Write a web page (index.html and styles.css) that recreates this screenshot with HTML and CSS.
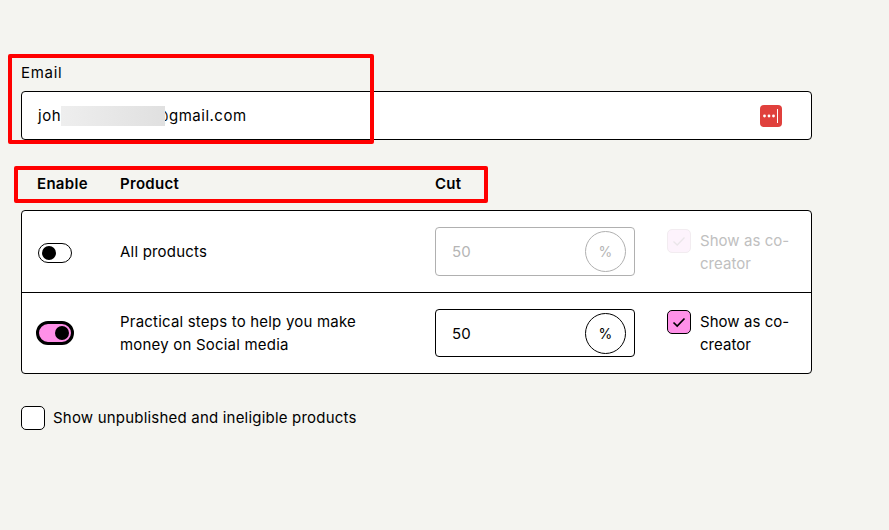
FILE: index.html
```html
<!DOCTYPE html>
<html lang="en">
<head>
<meta charset="utf-8">
<title>Collaborator</title>
<link rel="stylesheet" href="styles.css">
</head>
<body>
<main class="page">
  <section class="email-field">
    <label class="field-label" for="email">Email</label>
    <div class="email-input" id="email">
      <span class="email-text">joh<span class="redact"></span>@gmail.com</span>
      <svg class="pw-icon" width="22" height="22" viewBox="0 0 22 22" aria-hidden="true">
        <rect width="22" height="22" rx="4" fill="#e0403c"/>
        <circle cx="4.5" cy="11" r="1.4" fill="#fff"/>
        <circle cx="9" cy="11" r="1.4" fill="#fff"/>
        <circle cx="13.5" cy="11" r="1.4" fill="#fff"/>
        <rect x="17" y="4" width="1" height="14" fill="#fff"/>
      </svg>
    </div>
  </section>

  <div class="table-head">
    <span>Enable</span>
    <span>Product</span>
    <span>Cut</span>
  </div>

  <section class="table">
    <div class="row row-off">
      <span class="toggle"><span class="knob"></span></span>
      <span class="product">All products</span>
      <div class="cut cut-off">
        <span>50</span>
        <span class="pct">%</span>
      </div>
      <div class="cocreator cocreator-off">
        <span class="check check-off">
          <svg width="16" height="16" viewBox="0 0 16 16" aria-hidden="true"><path d="M2.5 8.5 6.2 12 13.5 4.5" fill="none" stroke="#eae6e9" stroke-width="1.3"/></svg>
        </span>
        <span>Show as co-creator</span>
      </div>
    </div>
    <div class="row">
      <span class="toggle toggle-on"><span class="knob"></span></span>
      <span class="product">Practical steps to help you make money on Social media</span>
      <div class="cut">
        <span>50</span>
        <span class="pct">%</span>
      </div>
      <div class="cocreator">
        <span class="check check-on">
          <svg width="16" height="16" viewBox="0 0 16 16" aria-hidden="true"><path d="M2.5 8.5 6.2 12 13.5 4.5" fill="none" stroke="#000" stroke-width="1.7"/></svg>
        </span>
        <span>Show as co-creator</span>
      </div>
    </div>
  </section>

  <div class="unpublished">
    <span class="check"></span>
    <span class="unpublished-text">Show unpublished and ineligible products</span>
  </div>
</main>
<div class="mark mark-email"></div>
<div class="mark mark-head"></div>
</body>
</html>
```

FILE: styles.css
```css
* { box-sizing: border-box; }
html, body { margin: 0; height: 100%; }
body {
  background: #f4f4f0;
  color: #000;
  font-family: Inter, "Liberation Sans", sans-serif;
  font-size: 15px;
  letter-spacing: 0.2px;
  line-height: 23px;
  overflow: hidden;
  position: relative;
}
.page { width: 812px; padding: 61px 0 0 21px; }
.email-field { display: flex; flex-direction: column; gap: 7px; }
.field-label { display: block; height: 23px; letter-spacing: 0.7px; }
.email-input {
  height: 49px;
  background: #fff;
  border: 1px solid #000;
  border-radius: 4px;
  display: flex;
  align-items: center;
  justify-content: space-between;
  padding: 0 29px 0 16px;
}
.email-text { display: inline-block; white-space: nowrap; letter-spacing: 0.5px; }
.redact {
  display: inline-block;
  width: 104px;
  height: 20px;
  margin-right: -11px;
  vertical-align: -5px;
  position: relative;
  background: linear-gradient(90deg, #eeeeee, #e0e0e0);
}
.pw-icon { display: block; }
.table-head {
  display: grid;
  grid-template-columns: 67px 299px 1fr;
  column-gap: 16px;
  padding: 32px 0 0 16px;
  height: 70px;
  font-weight: 600;
  letter-spacing: 0.3px;
}
.table {
  background: #fff;
  border: 1px solid #000;
  border-radius: 4px;
}
.row {
  display: grid;
  grid-template-columns: 66px 299px 200px 1fr;
  column-gap: 16px;
  align-items: center;
  padding: 16px;
  height: 81px;
}
.row + .row { border-top: 1px solid #000; }
.product { max-width: 250px; }
.toggle {
  width: 34px;
  height: 20px;
  margin-top: 2px;
  border: 1px solid #000;
  border-radius: 10px;
  background: #fff;
  display: flex;
  align-items: center;
  padding-left: 3px;
}
.knob { width: 14px; height: 14px; border-radius: 50%; background: #000; }
.toggle-on {
  width: 38px;
  height: 24px;
  margin: 0 0 0 -2px;
  border: 3px solid #000;
  border-radius: 12px;
  background: #ff90e8;
  justify-content: flex-end;
  padding: 0 2px 0 0;
}
.cut {
  height: 48px;
  border: 1px solid #000;
  border-radius: 4px;
  background: #fff;
  display: flex;
  align-items: center;
  justify-content: space-between;
  padding: 0 8px 0 16px;
}
.pct {
  width: 41px;
  height: 41px;
  border: 1px solid #000;
  border-radius: 50%;
  display: flex;
  align-items: center;
  justify-content: center;
  font-size: 14px;
}
.cut-off { height: 49px; border-color: #b0b0b0; color: #b5b5b5; }
.cut-off .pct { border-color: #b0b0b0; }
.cocreator {
  display: flex;
  align-items: flex-start;
  gap: 9px;
  margin-left: 16px;
  width: 128px;
  letter-spacing: 0.05px;
}
.cocreator-off { color: #c0c0c0; }
.check {
  flex: none;
  width: 24px;
  height: 24px;
  border: 1px solid #000;
  border-radius: 5px;
  background: #fff;
  display: flex;
  align-items: center;
  justify-content: center;
}
.check-on { background: #ff90e8; }
.check-off { background: #fdf3fc; border-color: #f2ecf0; }
.unpublished {
  display: flex;
  align-items: center;
  gap: 8px;
  margin-top: 32px;
}
.unpublished-text { margin-top: -2px; }
.mark { position: absolute; border: 4px solid #f00; border-radius: 2px; }
.mark-email { left: 8px; top: 54px; width: 366px; height: 90px; }
.mark-head { left: 14px; top: 166px; width: 474px; height: 37px; }
```
